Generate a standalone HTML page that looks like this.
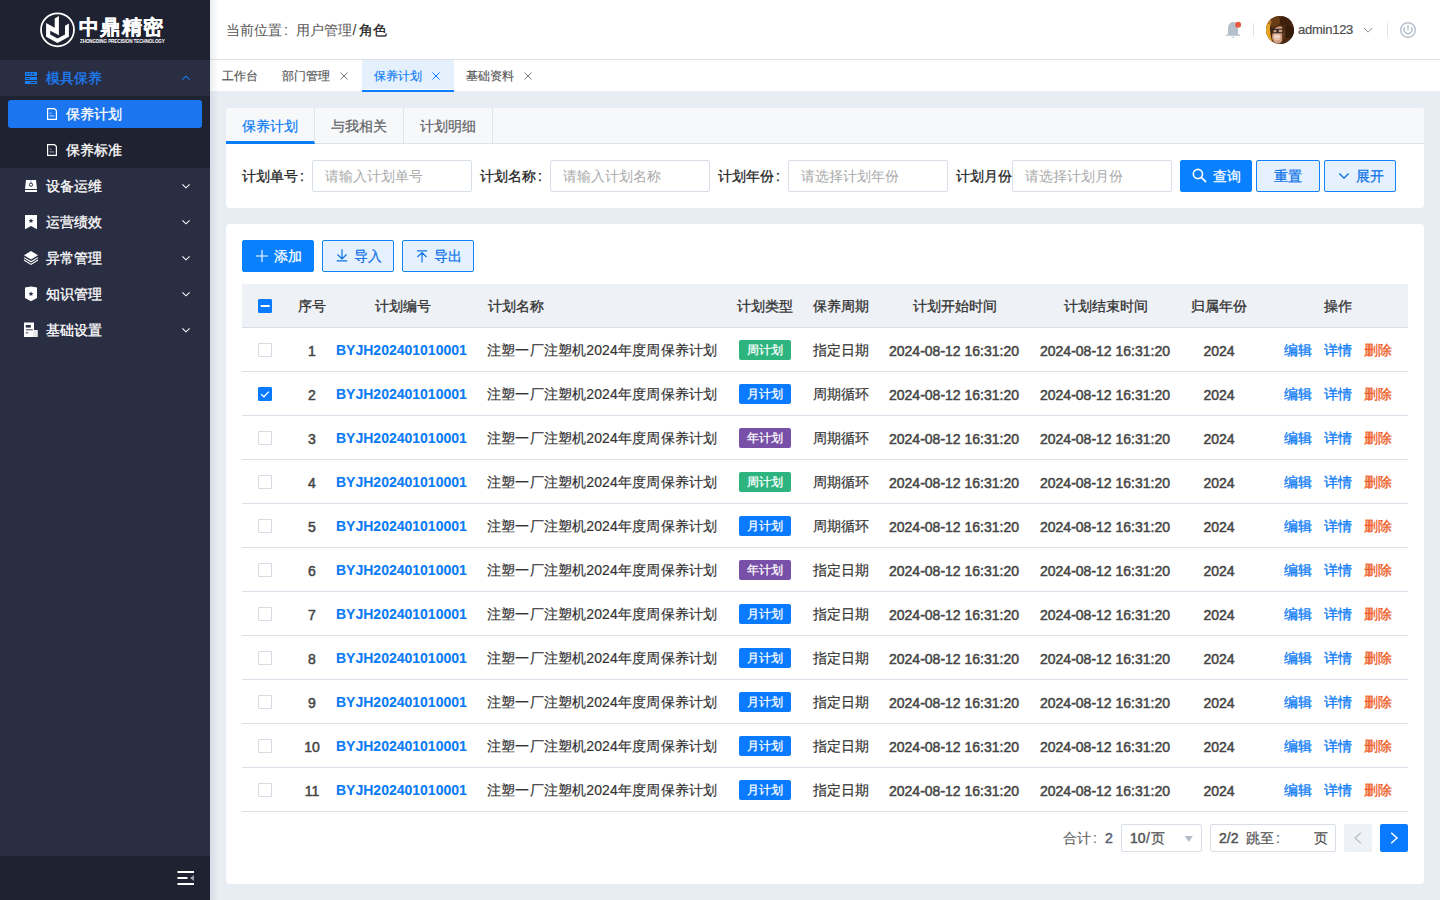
<!DOCTYPE html><html><head><meta charset="utf-8"><style>*{margin:0;padding:0;box-sizing:border-box}
html,body{width:1440px;height:900px;overflow:hidden}
body{position:relative;background:#e8ecf3;font-family:"Liberation Sans",sans-serif;font-size:14px;color:#333}
.abs{position:absolute}
svg{display:block}
/* sidebar */
#side{position:absolute;left:0;top:0;width:210px;height:900px;background:#2a2e42}
#logo{position:absolute;left:0;top:0;width:210px;height:60px;background:#1f2230}
#sub{position:absolute;left:0;top:96px;width:210px;height:72px;background:#1f2230}
#foot{position:absolute;left:0;top:856px;width:210px;height:44px;background:#1f2230}
.mi{position:absolute;left:0;width:210px;height:36px;color:#fff;font-size:14px;line-height:36px;-webkit-text-stroke:0.3px currentColor}
.mi .t{position:absolute;left:46px;top:0}
.mi svg{position:absolute;left:0;top:0}
.act{position:absolute;left:8px;top:100px;width:194px;height:28px;background:#1a75ee;border-radius:3px}
.smi{position:absolute;left:0;width:210px;height:36px;color:#fff;font-size:14px;line-height:36px;-webkit-text-stroke:0.3px currentColor}
.smi .t{position:absolute;left:66px;top:0}
.smi svg{position:absolute;left:0;top:0}
/* header */
#hdr{position:absolute;left:210px;top:0;width:1230px;height:60px;background:#fff;border-bottom:1px solid #dde2ea}
#tabs{position:absolute;left:210px;top:60px;width:1230px;height:31px;background:#fff}
.tb{position:absolute;top:0;height:31px;line-height:33px;font-size:12px;color:#555;-webkit-text-stroke:0.15px currentColor}
.tb.on{height:32px;background:linear-gradient(#e5f0fd 0,#e5f0fd 29px,#fff 29px,#fff 30px);color:#0b7bf7;border-bottom:2px solid #0a7cff}
/* cards */
.card{position:absolute;background:#fff;border-radius:4px}
.ctabs{position:absolute;left:0;top:0;width:1198px;height:36px;background:#f7f8fa;border-bottom:1px solid #dde3ec;border-radius:4px 4px 0 0}
.ct{position:absolute;top:0;height:35px;line-height:37px;-webkit-text-stroke:0.2px currentColor;font-size:14px;color:#606266;text-align:center;border-right:1px solid #e0e4eb}
.ct.on{color:#0b7bf7;border-bottom:3px solid #0b7bf7;height:36px}
.lbl{position:absolute;top:52px;height:32px;line-height:32px;font-size:14px;color:#222;-webkit-text-stroke:0.25px currentColor}
.inp{position:absolute;top:52px;height:32px;width:160px;border:1px solid #d8dee8;border-radius:2px;color:#aaa;font-size:14px;line-height:30px;padding-left:12px}
.btn{position:absolute;height:32px;border-radius:2px;font-size:14px;line-height:30px;-webkit-text-stroke:0.25px currentColor}
.btn span{position:absolute;top:0}
.btn svg{position:absolute;left:-1px;top:-1px}
.btn.pri{background:#0981ff;color:#fff;border:1px solid #0981ff}
.btn.def{background:#e6f1ff;color:#0b72e6;border:1px solid #1482fa}
/* table */
.th{position:absolute;left:16px;top:60px;width:1166px;height:44px;background:#eef1f6;border-bottom:1px solid #d9dfe8}
.tr{position:absolute;left:242px;width:1166px;height:44px;border-bottom:1px solid #dbe1ea;background:#fff}
.c{position:absolute;top:1px;height:43px;line-height:43px;font-size:14px;color:#333;white-space:nowrap;-webkit-text-stroke:0.1px currentColor}
.hc{position:absolute;top:0;height:43px;line-height:45px;font-size:14px;color:#333;-webkit-text-stroke:0.3px currentColor;white-space:nowrap;text-align:center}
.c0{left:16px;width:14px}
.c1{left:50px;width:40px;text-align:center}
.c2{left:94px;width:130px;text-align:center}
.tag{-webkit-text-stroke:0.25px #fff}
.c3{left:245px;letter-spacing:0.17px;-webkit-text-stroke:0.18px currentColor}
.c4{left:497px;width:52px}
.c5{left:571px;-webkit-text-stroke:0.18px currentColor}
.c6{left:647px}
.c7{left:798px}
.c8{left:932px;width:90px;text-align:center}
.c9{left:1042px}
.num{font-weight:normal;color:#454545;top:2px;-webkit-text-stroke:0.5px currentColor}
.code{color:#0b7bf7;font-weight:bold}
.cb{position:absolute;top:15px;left:0;width:14px;height:14px;border:1px solid #d6dbe3;background:#fff;border-radius:1px}
.cb.on{background:#0a7bff;border-color:#0a7bff}
.cb svg{position:absolute;left:-1px;top:-1px}
.tag{position:absolute;top:11px;left:0;width:52px;height:20px;line-height:20px;text-align:center;color:#fff;font-size:12px;border-radius:2px}
.tag.g{background:#2eb57f}
.tag.b{background:#0a7bff}
.tag.p{background:#7950a8}
.lk{color:#0b7bf7;margin-right:12px;-webkit-text-stroke:0.3px currentColor}
.lk.del{color:#f05a23;margin-right:0}
.pg{position:absolute;height:28px;border:1px solid #d8dee8;border-radius:2px;font-size:14px;line-height:26px;color:#555}

.tr .cb{top:14px}
.col{display:inline-block;width:14px;padding-left:2px}
</style></head><body><div id="side">
  <div id="logo">
    <svg width="210" height="60" viewBox="0 0 210 60">
      <circle cx="57.5" cy="29.8" r="16.5" fill="none" stroke="#fff" stroke-width="1.8"/>
      <polygon fill="#fff" points="46.1,23.1 54.7,27.7 54.7,18.4 58.9,16.1 58.9,35.3 50.2,30.7 50.2,34.6 57.5,38.5 65,34.6 65,25.7 68.9,23.4 68.9,36.7 57.5,43.1 46.1,36.7"/>
    </svg>
    <div class="abs" style="left:79px;top:13.5px;font-size:20px;line-height:26px;font-weight:bold;color:#fff;letter-spacing:1.3px;white-space:nowrap;-webkit-text-stroke:0.35px #fff">中鼎精密</div>
    <div class="abs" style="left:79.5px;top:39px;font-size:10px;line-height:10px;color:#fff;white-space:nowrap;transform:scale(0.455,0.5);transform-origin:0 0;font-weight:bold;letter-spacing:-0.2px">ZHONGDING PRECISION TECHNOLOGY</div>
  </div>
  <div id="sub"></div>
  <div id="foot">
    <svg width="210" height="44" viewBox="0 0 210 44">
      <rect x="177.5" y="15" width="16.5" height="2" fill="#fff"/>
      <rect x="177.5" y="21" width="10" height="2" fill="#fff"/>
      <rect x="177.5" y="27" width="16.5" height="2" fill="#fff"/>
      <polygon points="190,22 194,19 194,25" fill="#9aa0ad"/>
    </svg>
  </div>
  <div class="mi" style="top:60px;color:#1e7ef5">
    <svg width="210" height="36" viewBox="0 60 210 36">
      <rect x="25" y="72" width="12" height="4" fill="#1a7ef5"/>
      <rect x="25" y="77" width="12" height="3" fill="#1a7ef5"/>
      <rect x="25" y="81" width="12" height="3" fill="#1a7ef5"/>
      <rect x="26.3" y="73.3" width="1.6" height="1.4" fill="#2a2e42"/>
      <rect x="29.2" y="73.3" width="1.6" height="1.4" fill="#2a2e42"/>
      <rect x="32.2" y="73.3" width="1.6" height="1.4" fill="#2a2e42"/>
      <rect x="26.3" y="78.1" width="3.4" height="0.9" fill="#2a2e42"/>
      <rect x="30.2" y="82.1" width="5.5" height="0.9" fill="#2a2e42"/>
      <polyline points="182.3,79.6 186,76.2 189.7,79.6" fill="none" stroke="#1a7ef5" stroke-width="1.1"/>
    </svg>
    <span class="t">模具保养</span></div>
  <div class="act"></div>
  <div class="smi" style="top:96px">
    <svg width="60" height="36" viewBox="0 96 60 36"><path d="M47.6 108.6 H54.5 L56.4 110.5 V119.4 H47.6 Z" fill="none" stroke="#fff" stroke-width="1.2"/><rect x="49.4" y="112.6" width="2.2" height="1.2" fill="#8fbaf5"/><rect x="49.4" y="115.2" width="4.8" height="1.4" fill="#8fbaf5"/></svg>
    <span class="t">保养计划</span></div>
  <div class="smi" style="top:132px">
    <svg width="60" height="36" viewBox="0 132 60 36"><path d="M47.6 144.6 H54.5 L56.4 146.5 V155.4 H47.6 Z" fill="none" stroke="#fff" stroke-width="1.2"/><rect x="49.4" y="148.6" width="2.2" height="1.2" fill="#777c88"/><rect x="49.4" y="151.2" width="4.8" height="1.4" fill="#777c88"/></svg>
    <span class="t">保养标准</span></div>
  <div class="mi" style="top:168px">
    <svg width="210" height="36" viewBox="0 168 210 36">
      <path d="M26 180 H36 L37 189 H25 Z" fill="#fff"/>
      <circle cx="31" cy="184.7" r="1.6" fill="none" stroke="#2a2e42" stroke-width="1"/>
      <rect x="30.6" y="180" width="0.8" height="3" fill="#2a2e42" opacity="0.5"/>
      <rect x="25" y="190" width="12" height="2" fill="#fff"/>
      <polyline points="182.4,184.4 186,187.8 189.6,184.4" fill="none" stroke="#fff" stroke-width="1.1"/>
    </svg>
    <span class="t">设备运维</span></div>
  <div class="mi" style="top:204px">
    <svg width="210" height="36" viewBox="0 204 210 36">
      <path d="M25 215 H37 V229.3 L31 226 L25 229.3 Z" fill="#fff"/>
      <polygon points="31,218.3 31.7,220 33.4,220.1 32.1,221.2 32.5,222.9 31,222 29.5,222.9 29.9,221.2 28.6,220.1 30.3,220" fill="#2a2e42"/>
      <polyline points="182.4,220.4 186,223.8 189.6,220.4" fill="none" stroke="#fff" stroke-width="1.1"/>
    </svg>
    <span class="t">运营绩效</span></div>
  <div class="mi" style="top:240px">
    <svg width="210" height="36" viewBox="0 240 210 36">
      <polygon points="31,251 38,255.3 31,259.6 24,255.3" fill="#fff"/>
      <polyline points="24,257.6 31,261.8 38,257.6" fill="none" stroke="#fff" stroke-width="1.1"/>
      <polyline points="24,260 31,264.4 38,260" fill="none" stroke="#fff" stroke-width="1.1"/>
      <polyline points="182.4,256.4 186,259.8 189.6,256.4" fill="none" stroke="#fff" stroke-width="1.1"/>
    </svg>
    <span class="t">异常管理</span></div>
  <div class="mi" style="top:276px">
    <svg width="210" height="36" viewBox="0 276 210 36">
      <path d="M25 287.5 L31 286.5 L37 287.5 V298 L31 301.2 L25 298 Z" fill="#fff"/>
      <polygon points="31,291.3 31.7,293 33.4,293.1 32.1,294.2 32.5,295.9 31,295 29.5,295.9 29.9,294.2 28.6,293.1 30.3,293" fill="#2a2e42"/>
      <polyline points="182.4,292.4 186,295.8 189.6,292.4" fill="none" stroke="#fff" stroke-width="1.1"/>
    </svg>
    <span class="t">知识管理</span></div>
  <div class="mi" style="top:312px">
    <svg width="210" height="36" viewBox="0 312 210 36">
      <rect x="24" y="322.5" width="10" height="14.5" fill="#fff"/>
      <rect x="33" y="330" width="4.8" height="7" fill="#e8e8ea"/>
      <rect x="25.8" y="325" width="5" height="2.6" fill="#2a2e42"/>
      <rect x="25.8" y="329.4" width="7" height="0.9" fill="#2a2e42"/>
      <rect x="25.8" y="332.4" width="2.5" height="0.9" fill="#2a2e42"/>
      <polyline points="182.4,328.4 186,331.8 189.6,328.4" fill="none" stroke="#fff" stroke-width="1.1"/>
    </svg>
    <span class="t">基础设置</span></div>
</div>
<div id="hdr">
  <div class="abs" style="left:16px;top:0;line-height:60px;font-size:14px;color:#555;white-space:nowrap">当前位置<span class="col">:</span>用户管理<span style="display:inline-block;padding:0 2.5px 0 0.5px;color:#333">/</span><span style="color:#222;-webkit-text-stroke:0.25px currentColor">角色</span></div>
  <svg class="abs" style="left:0;top:0" width="1230" height="60" viewBox="210 0 1230 60">
    <path d="M1228 34.5 V28.5 C1228 24.5 1230.5 22 1233 22 C1235.5 22 1238 24.5 1238 28.5 V34.5 H1240 V35.8 H1226 V34.5 Z" fill="#b5c0cc"/>
    <path d="M1231 36.8 H1235 Q1233 38.8 1231 36.8 Z" fill="#b5c0cc"/>
    <circle cx="1238.1" cy="24.8" r="3" fill="#e55a3f"/>
    <rect x="1253" y="23" width="1" height="14" fill="#e1e5eb"/>
    <rect x="1387" y="23" width="1" height="14" fill="#e1e5eb"/>
    <defs><clipPath id="av"><circle cx="1280" cy="30" r="14"/></clipPath></defs>
    <g clip-path="url(#av)">
      <rect x="1266" y="16" width="28" height="28" fill="#4a2811"/>
      <circle cx="1274" cy="21" r="6" fill="#6a3c16"/>
      <circle cx="1286" cy="21" r="6" fill="#3e200c"/>
      <circle cx="1289" cy="32" r="6" fill="#351b0a"/>
      <path d="M1266 22 Q1268 20 1271 22 Q1268 30 1273 44 H1266 Z" fill="#e6a624"/>
      <circle cx="1269" cy="22" r="2.5" fill="#b87822"/>
      <ellipse cx="1278.5" cy="35" rx="6.2" ry="9" fill="#cf9a7e" transform="rotate(15 1278.5 35)"/>
      <ellipse cx="1277" cy="37" rx="3.5" ry="3.5" fill="#e9c3ae"/>
      <path d="M1274 35.2 Q1277 37.5 1280 35.5 L1279.5 36.6 Q1277 38 1274.5 36.5 Z" fill="#fff"/>
      <path d="M1271.5 29.5 H1277 V32.8 H1272.3 Z M1277.8 29.2 H1284 L1283.5 32.8 H1278.3 Z" fill="none" stroke="#2a2422" stroke-width="1.1"/>
      <rect x="1282" y="25" width="4" height="19" fill="#4a2811" opacity="0.8"/>
    </g>
    <polyline points="1364,28 1368,32.2 1372.2,28" fill="none" stroke="#8a8f96" stroke-width="1"/>
    <circle cx="1408" cy="30" r="7.3" fill="none" stroke="#b7c2ce" stroke-width="1.5"/>
    <path d="M1404.9 27 A4 4 0 1 0 1411.1 27" fill="none" stroke="#b7c2ce" stroke-width="1.4"/>
    <rect x="1407.3" y="25" width="1.4" height="5.5" fill="#b7c2ce"/>
  </svg>
  <div class="abs" style="left:1088px;top:0;line-height:60px;font-size:13px;color:#4d4d4d;letter-spacing:-0.25px;-webkit-text-stroke:0.2px currentColor">admin123</div>
</div>
<div id="tabs">
  <div class="tb" style="left:12px">工作台</div>
  <div class="tb" style="left:72px">部门管理</div>
  <div class="tb on" style="left:152px;width:92px;padding-left:12px">保养计划</div>
  <div class="tb" style="left:256px">基础资料</div>
  <svg class="abs" style="left:0;top:0" width="1230" height="31" viewBox="210 60 1230 31">
    <path d="M340.5 72.5 L347.5 79.5 M347.5 72.5 L340.5 79.5" stroke="#777" stroke-width="1"/>
    <path d="M432.5 72.5 L439.5 79.5 M439.5 72.5 L432.5 79.5" stroke="#0b7bf7" stroke-width="1"/>
    <path d="M524.5 72.5 L531.5 79.5 M531.5 72.5 L524.5 79.5" stroke="#777" stroke-width="1"/>
  </svg>
</div>
<div class="card" style="left:226px;top:108px;width:1198px;height:100px">
  <div class="ctabs">
    <div class="ct on" style="left:0;width:89px">保养计划</div>
    <div class="ct" style="left:89px;width:89px">与我相关</div>
    <div class="ct" style="left:178px;width:89px">计划明细</div>
  </div>
  <div class="lbl" style="left:16px">计划单号<span class="col">:</span></div><div class="inp" style="left:86px">请输入计划单号</div>
  <div class="lbl" style="left:254px">计划名称<span class="col">:</span></div><div class="inp" style="left:324px">请输入计划名称</div>
  <div class="lbl" style="left:492px">计划年份<span class="col">:</span></div><div class="inp" style="left:562px">请选择计划年份</div>
  <div class="lbl" style="left:730px">计划月份</div><div class="inp" style="left:786px">请选择计划月份</div>
  <div class="btn pri" style="left:954px;top:52px;width:72px">
    <svg width="72" height="32" viewBox="1180 160 72 32"><circle cx="1197.9" cy="174" r="4.6" fill="none" stroke="#fff" stroke-width="1.6"/><path d="M1201.3 177.4 L1205.6 181.6" stroke="#fff" stroke-width="1.7" stroke-linecap="round"/></svg>
    <span style="left:32px">查询</span></div>
  <div class="btn def" style="left:1030px;top:52px;width:64px"><span style="left:17px">重置</span></div>
  <div class="btn def" style="left:1098px;top:52px;width:72px">
    <svg width="72" height="32" viewBox="1324 160 72 32"><polyline points="1339.3,173.5 1344,178 1348.7,173.5" fill="none" stroke="#0b72e6" stroke-width="1.3"/></svg>
    <span style="left:31px">展开</span></div>
</div>
<div class="card" style="left:226px;top:224px;width:1198px;height:660px">
  <div class="btn pri" style="left:16px;top:16px;width:72px">
    <svg width="72" height="32" viewBox="242 240 72 32"><path d="M256 256 H268 M262 250 V262" stroke="#fff" stroke-width="1.1"/></svg>
    <span style="left:31px">添加</span></div>
  <div class="btn def" style="left:96px;top:16px;width:72px">
    <svg width="72" height="32" viewBox="322 240 72 32"><path d="M342 249.3 V259 M337.5 254.5 L342 259 L346.5 254.5 M336.7 260.8 H347.2" fill="none" stroke="#0b72e6" stroke-width="1.2"/></svg>
    <span style="left:31px">导入</span></div>
  <div class="btn def" style="left:176px;top:16px;width:72px">
    <svg width="72" height="32" viewBox="402 240 72 32"><path d="M417 250.8 H427.2 M422 252.5 V262.4 M417.5 257 L422 252.5 L426.5 257" fill="none" stroke="#0b72e6" stroke-width="1.2"/></svg>
    <span style="left:31px">导出</span></div>
  <div class="th">
    <div class="hc" style="left:16px"><span class="cb on" style="top:15px"><svg width="14" height="14" viewBox="0 0 14 14"><rect x="2.7" y="6" width="9" height="2" fill="#fff"/></svg></span></div>
    <div class="hc" style="left:50px;width:40px">序号</div>
    <div class="hc" style="left:96px;width:130px">计划编号</div>
    <div class="hc" style="left:246px">计划名称</div>
    <div class="hc" style="left:495px">计划类型</div>
    <div class="hc" style="left:571px">保养周期</div>
    <div class="hc" style="left:671px">计划开始时间</div>
    <div class="hc" style="left:822px">计划结束时间</div>
    <div class="hc" style="left:949px">归属年份</div>
    <div class="hc" style="left:1082px">操作</div>
  </div>
  <div class="abs" style="left:837px;top:600px;line-height:28px;font-size:14px;color:#666;white-space:nowrap;width:60px;-webkit-text-stroke:0.15px currentColor">合计<span class="col">:</span></div><div class="abs" style="left:879px;top:600px;line-height:28px;font-size:14px;color:#5a6270;-webkit-text-stroke:0.5px currentColor">2</div>
  <div class="pg" style="left:895px;top:600px;width:81px"><span class="abs" style="left:8px;top:0;color:#555;-webkit-text-stroke:0.5px currentColor">10</span><span class="abs" style="left:24px;top:0;color:#555;-webkit-text-stroke:0.3px currentColor">/</span><span class="abs" style="left:29px;top:0;-webkit-text-stroke:0.2px currentColor">页</span>
    <svg class="abs" style="left:0;top:0" width="81" height="28" viewBox="1121 824 81 28"><polygon points="1183.8,835 1191.8,835 1187.8,841" fill="#b0bcc8"/></svg></div>
  <div class="pg" style="left:984px;top:600px;width:126px"><span class="abs" style="left:8px;top:0;-webkit-text-stroke:0.5px currentColor">2/2</span><span class="abs" style="left:35px;top:0;-webkit-text-stroke:0.2px currentColor">跳至<span class="col">:</span></span><span class="abs" style="left:103px;top:0;-webkit-text-stroke:0.2px currentColor">页</span></div>
  <div class="abs" style="left:1118px;top:600px;width:28px;height:28px;background:#eef1f6;border-radius:2px">
    <svg width="28" height="28" viewBox="1344 824 28 28"><polyline points="1360.8,832.8 1355,838 1360.8,843.2" fill="none" stroke="#bac2cc" stroke-width="1.3"/></svg></div>
  <div class="abs" style="left:1154px;top:600px;width:28px;height:28px;background:#0a7bff;border-radius:2px">
    <svg width="28" height="28" viewBox="1380 824 28 28"><polyline points="1391.2,832.8 1397,838 1391.2,843.2" fill="none" stroke="#fff" stroke-width="1.5"/></svg></div>
</div>
<div class="tr" style="top:328px">
<div class="c c0"><span class="cb"></span></div><div class="c c1 num">1</div><div class="c c2 code">BYJH202401010001</div><div class="c c3">注塑一厂注塑机2024年度周保养计划</div><div class="c c4"><span class="tag g">周计划</span></div><div class="c c5">指定日期</div><div class="c c6 num">2024-08-12 16:31:20</div><div class="c c7 num">2024-08-12 16:31:20</div><div class="c c8 num">2024</div><div class="c c9"><span class="lk">编辑</span><span class="lk">详情</span><span class="lk del">删除</span></div></div>
<div class="tr" style="top:372px">
<div class="c c0"><span class="cb on"><svg width="14" height="14" viewBox="0 0 14 14"><path d="M3.2 7.2 L5.9 9.8 L10.8 4.6" fill="none" stroke="#fff" stroke-width="1.3"/></svg></span></div><div class="c c1 num">2</div><div class="c c2 code">BYJH202401010001</div><div class="c c3">注塑一厂注塑机2024年度周保养计划</div><div class="c c4"><span class="tag b">月计划</span></div><div class="c c5">周期循环</div><div class="c c6 num">2024-08-12 16:31:20</div><div class="c c7 num">2024-08-12 16:31:20</div><div class="c c8 num">2024</div><div class="c c9"><span class="lk">编辑</span><span class="lk">详情</span><span class="lk del">删除</span></div></div>
<div class="tr" style="top:416px">
<div class="c c0"><span class="cb"></span></div><div class="c c1 num">3</div><div class="c c2 code">BYJH202401010001</div><div class="c c3">注塑一厂注塑机2024年度周保养计划</div><div class="c c4"><span class="tag p">年计划</span></div><div class="c c5">周期循环</div><div class="c c6 num">2024-08-12 16:31:20</div><div class="c c7 num">2024-08-12 16:31:20</div><div class="c c8 num">2024</div><div class="c c9"><span class="lk">编辑</span><span class="lk">详情</span><span class="lk del">删除</span></div></div>
<div class="tr" style="top:460px">
<div class="c c0"><span class="cb"></span></div><div class="c c1 num">4</div><div class="c c2 code">BYJH202401010001</div><div class="c c3">注塑一厂注塑机2024年度周保养计划</div><div class="c c4"><span class="tag g">周计划</span></div><div class="c c5">周期循环</div><div class="c c6 num">2024-08-12 16:31:20</div><div class="c c7 num">2024-08-12 16:31:20</div><div class="c c8 num">2024</div><div class="c c9"><span class="lk">编辑</span><span class="lk">详情</span><span class="lk del">删除</span></div></div>
<div class="tr" style="top:504px">
<div class="c c0"><span class="cb"></span></div><div class="c c1 num">5</div><div class="c c2 code">BYJH202401010001</div><div class="c c3">注塑一厂注塑机2024年度周保养计划</div><div class="c c4"><span class="tag b">月计划</span></div><div class="c c5">周期循环</div><div class="c c6 num">2024-08-12 16:31:20</div><div class="c c7 num">2024-08-12 16:31:20</div><div class="c c8 num">2024</div><div class="c c9"><span class="lk">编辑</span><span class="lk">详情</span><span class="lk del">删除</span></div></div>
<div class="tr" style="top:548px">
<div class="c c0"><span class="cb"></span></div><div class="c c1 num">6</div><div class="c c2 code">BYJH202401010001</div><div class="c c3">注塑一厂注塑机2024年度周保养计划</div><div class="c c4"><span class="tag p">年计划</span></div><div class="c c5">指定日期</div><div class="c c6 num">2024-08-12 16:31:20</div><div class="c c7 num">2024-08-12 16:31:20</div><div class="c c8 num">2024</div><div class="c c9"><span class="lk">编辑</span><span class="lk">详情</span><span class="lk del">删除</span></div></div>
<div class="tr" style="top:592px">
<div class="c c0"><span class="cb"></span></div><div class="c c1 num">7</div><div class="c c2 code">BYJH202401010001</div><div class="c c3">注塑一厂注塑机2024年度周保养计划</div><div class="c c4"><span class="tag b">月计划</span></div><div class="c c5">指定日期</div><div class="c c6 num">2024-08-12 16:31:20</div><div class="c c7 num">2024-08-12 16:31:20</div><div class="c c8 num">2024</div><div class="c c9"><span class="lk">编辑</span><span class="lk">详情</span><span class="lk del">删除</span></div></div>
<div class="tr" style="top:636px">
<div class="c c0"><span class="cb"></span></div><div class="c c1 num">8</div><div class="c c2 code">BYJH202401010001</div><div class="c c3">注塑一厂注塑机2024年度周保养计划</div><div class="c c4"><span class="tag b">月计划</span></div><div class="c c5">指定日期</div><div class="c c6 num">2024-08-12 16:31:20</div><div class="c c7 num">2024-08-12 16:31:20</div><div class="c c8 num">2024</div><div class="c c9"><span class="lk">编辑</span><span class="lk">详情</span><span class="lk del">删除</span></div></div>
<div class="tr" style="top:680px">
<div class="c c0"><span class="cb"></span></div><div class="c c1 num">9</div><div class="c c2 code">BYJH202401010001</div><div class="c c3">注塑一厂注塑机2024年度周保养计划</div><div class="c c4"><span class="tag b">月计划</span></div><div class="c c5">指定日期</div><div class="c c6 num">2024-08-12 16:31:20</div><div class="c c7 num">2024-08-12 16:31:20</div><div class="c c8 num">2024</div><div class="c c9"><span class="lk">编辑</span><span class="lk">详情</span><span class="lk del">删除</span></div></div>
<div class="tr" style="top:724px">
<div class="c c0"><span class="cb"></span></div><div class="c c1 num">10</div><div class="c c2 code">BYJH202401010001</div><div class="c c3">注塑一厂注塑机2024年度周保养计划</div><div class="c c4"><span class="tag b">月计划</span></div><div class="c c5">指定日期</div><div class="c c6 num">2024-08-12 16:31:20</div><div class="c c7 num">2024-08-12 16:31:20</div><div class="c c8 num">2024</div><div class="c c9"><span class="lk">编辑</span><span class="lk">详情</span><span class="lk del">删除</span></div></div>
<div class="tr" style="top:768px">
<div class="c c0"><span class="cb"></span></div><div class="c c1 num">11</div><div class="c c2 code">BYJH202401010001</div><div class="c c3">注塑一厂注塑机2024年度周保养计划</div><div class="c c4"><span class="tag b">月计划</span></div><div class="c c5">指定日期</div><div class="c c6 num">2024-08-12 16:31:20</div><div class="c c7 num">2024-08-12 16:31:20</div><div class="c c8 num">2024</div><div class="c c9"><span class="lk">编辑</span><span class="lk">详情</span><span class="lk del">删除</span></div></div>

<div class="abs" style="left:210px;top:0;width:8px;height:900px;background:linear-gradient(to right,rgba(40,50,80,0.09),rgba(40,50,80,0))"></div>
</body></html>
